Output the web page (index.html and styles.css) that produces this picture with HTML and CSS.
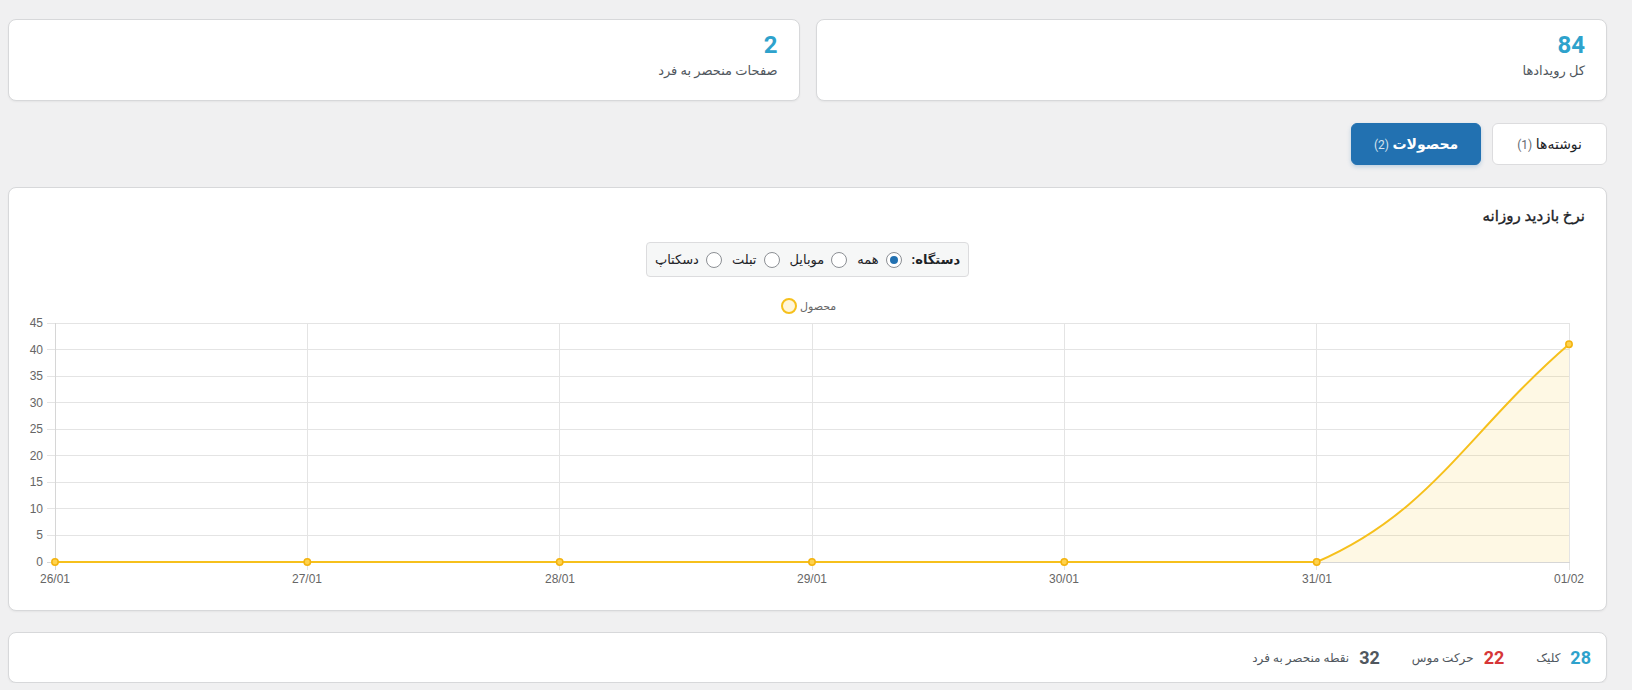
FILE: index.html
```html
<!DOCTYPE html>
<html lang="fa">
<head>
<meta charset="utf-8">
<title>آمار</title>
<link rel="stylesheet" href="styles.css">
</head>
<body>
<div class="wrap" dir="rtl">
  <div class="cards">
    <div class="card stat-card">
      <div class="num">84</div>
      <div class="lbl">کل رویدادها</div>
    </div>
    <div class="card stat-card">
      <div class="num">2</div>
      <div class="lbl">صفحات منحصر به فرد</div>
    </div>
  </div>

  <div class="tabs">
    <button class="tab">نوشته‌ها <span class="cnt">(1)</span></button>
    <button class="tab active">محصولات <span class="cnt">(2)</span></button>
  </div>

  <div class="card chart-card">
    <div class="chart-head">
      <h3 class="title">نرخ بازدید روزانه</h3>
      <div class="device-row">
        <div class="device">
          <span class="dlabel">دستگاه:</span>
          <label class="opt"><span class="rb checked"></span>همه</label>
          <label class="opt"><span class="rb"></span>موبایل</label>
          <label class="opt"><span class="rb"></span>تبلت</label>
          <label class="opt"><span class="rb"></span>دسکتاپ</label>
        </div>
      </div>
    </div>
    <svg class="chart" width="1597" height="324" viewBox="0 0 1597 324" xmlns="http://www.w3.org/2000/svg">
      <!-- legend -->
      <circle cx="780" cy="20" r="7" fill="#fff6db" stroke="#f6c01c" stroke-width="2"/>
      <text x="791" y="24" class="legend">محصول</text>

      <!-- horizontal grid -->
      <g stroke="#e4e4e4" stroke-width="1">
        <line x1="38" y1="37.5" x2="1560" y2="37.5"/>
        <line x1="38" y1="63.5" x2="1560" y2="63.5"/>
        <line x1="38" y1="90.5" x2="1560" y2="90.5"/>
        <line x1="38" y1="116.5" x2="1560" y2="116.5"/>
        <line x1="38" y1="143.5" x2="1560" y2="143.5"/>
        <line x1="38" y1="169.5" x2="1560" y2="169.5"/>
        <line x1="38" y1="196.5" x2="1560" y2="196.5"/>
        <line x1="38" y1="222.5" x2="1560" y2="222.5"/>
        <line x1="38" y1="249.5" x2="1560" y2="249.5"/>
      </g>
      <!-- vertical grid -->
      <g stroke="#e4e4e4" stroke-width="1">
        <line x1="298.5" y1="37" x2="298.5" y2="284"/>
        <line x1="550.5" y1="37" x2="550.5" y2="284"/>
        <line x1="803.5" y1="37" x2="803.5" y2="284"/>
        <line x1="1055.5" y1="37" x2="1055.5" y2="284"/>
        <line x1="1307.5" y1="37" x2="1307.5" y2="284"/>
        <line x1="1560.5" y1="37" x2="1560.5" y2="284"/>
      </g>
      <!-- axes -->
      <g stroke="#d6d6d6" stroke-width="1">
        <line x1="46.5" y1="37" x2="46.5" y2="284"/>
        <line x1="38" y1="276.5" x2="1561" y2="276.5"/>
      </g>

      <!-- y labels -->
      <g class="tick" text-anchor="end">
        <text x="34" y="41">45</text>
        <text x="34" y="68">40</text>
        <text x="34" y="94">35</text>
        <text x="34" y="121">30</text>
        <text x="34" y="147">25</text>
        <text x="34" y="174">20</text>
        <text x="34" y="200">15</text>
        <text x="34" y="227">10</text>
        <text x="34" y="253">5</text>
        <text x="34" y="280">0</text>
      </g>
      <!-- x labels -->
      <g class="tick" text-anchor="middle">
        <text x="46" y="297">26/01</text>
        <text x="298" y="297">27/01</text>
        <text x="551" y="297">28/01</text>
        <text x="803" y="297">29/01</text>
        <text x="1055" y="297">30/01</text>
        <text x="1308" y="297">31/01</text>
        <text x="1560" y="297">01/02</text>
      </g>

      <!-- fill -->
      <path d="M1307.7 276 C1422.6 226.4 1459.1 145.3 1560 58.2 L1560 276 Z" fill="rgba(250,195,30,0.12)"/>
      <!-- line -->
      <path d="M46 276 L1307.7 276 C1422.6 226.4 1459.1 145.3 1560 58.2" fill="none" stroke="#f6c01c" stroke-width="2"/>
      <!-- points -->
      <g fill="#ffd24d" stroke="#f3b310" stroke-width="1.5">
        <circle cx="46" cy="276" r="3.2"/>
        <circle cx="298.3" cy="276" r="3.2"/>
        <circle cx="550.7" cy="276" r="3.2"/>
        <circle cx="803" cy="276" r="3.2"/>
        <circle cx="1055.3" cy="276" r="3.2"/>
        <circle cx="1307.7" cy="276" r="3.2"/>
        <circle cx="1560" cy="58.2" r="3.2"/>
      </g>
    </svg>
  </div>

  <div class="card summary">
    <div class="sum-item"><span class="snum blue">28</span><span class="slbl">کلیک</span></div>
    <div class="sum-item"><span class="snum red">22</span><span class="slbl">حرکت موس</span></div>
    <div class="sum-item"><span class="snum gray">32</span><span class="slbl">نقطه منحصر به فرد</span></div>
  </div>
</div>
</body>
</html>
```

FILE: styles.css
```css
* { box-sizing: border-box; }

body {
  margin: 0;
  background: #f0f0f1;
  font-family: Roboto, "DejaVu Sans", sans-serif;
  color: #1d2327;
}

.wrap {
  padding: 19px 25px 0 8px;
}

.card {
  background: #fff;
  border: 1px solid #d7d8da;
  border-radius: 8px;
  box-shadow: 0 1px 2px rgba(0, 0, 0, 0.05);
}

.cards {
  display: grid;
  grid-template-columns: 1fr 1fr;
  gap: 16px;
}

.stat-card {
  height: 82px;
  padding: 11px 21px 0;
}

.num {
  font-size: 24px;
  line-height: 29px;
  font-weight: 700;
  color: #2ea2cc;
}

.lbl {
  font-size: 13px;
  line-height: 20px;
  color: #50575e;
  margin-top: 1px;
}

.tabs {
  display: flex;
  gap: 11px;
  margin-top: 22px;
}

.tab {
  height: 42px;
  padding: 0 24px;
  border: 1px solid #dcdcde;
  border-radius: 6px;
  background: #fff;
  font-family: inherit;
  font-size: 14px;
  color: #1d2327;
  cursor: pointer;
}

.tab .cnt {
  font-size: 12px;
  color: #646970;
}

.tab.active {
  background: #2271b1;
  border-color: #2271b1;
  color: #fff;
  font-weight: 700;
  padding: 0 22px;
  box-shadow: 0 2px 4px rgba(34, 113, 177, 0.25);
}

.tab.active .cnt {
  color: #d5e3f0;
  font-weight: 400;
}

.chart-card {
  margin-top: 22px;
}

.chart-head {
  padding: 16px 21px 0;
}

.title {
  margin: 0;
  font-size: 15px;
  line-height: 24px;
  font-weight: 400;
  -webkit-text-stroke: 0.35px #1d2327;
  color: #1d2327;
}

.device-row {
  display: flex;
  justify-content: center;
  margin-top: 14px;
}

.device {
  display: flex;
  align-items: center;
  gap: 10px;
  height: 35px;
  padding: 0 8px;
  background: #f6f7f7;
  border: 1px solid #dcdcde;
  border-radius: 4px;
  font-size: 13px;
  color: #1d2327;
}

.dlabel {
  font-weight: 700;
}

.opt {
  display: flex;
  align-items: center;
  gap: 7px;
}

.rb {
  width: 16px;
  height: 16px;
  border: 1px solid #8c8f94;
  border-radius: 50%;
  background: #fff;
  display: flex;
  align-items: center;
  justify-content: center;
}

.rb.checked::after {
  content: "";
  width: 8px;
  height: 8px;
  border-radius: 50%;
  background: #2271b1;
}

.chart {
  display: block;
  margin-top: 9px;
  direction: ltr;
}

.chart .tick {
  font-family: "Liberation Sans", Arial, sans-serif;
  font-size: 12px;
  fill: #666;
}

.chart .legend {
  font-family: "DejaVu Sans", sans-serif;
  font-size: 11px;
  fill: #666;
}

.summary {
  margin-top: 21px;
  height: 51px;
  display: flex;
  align-items: center;
  gap: 32px;
  padding: 0 15px;
}

.sum-item {
  display: flex;
  align-items: center;
  gap: 10px;
}

.snum {
  font-size: 18px;
  font-weight: 700;
}

.snum.blue { color: #2ea2cc; }
.snum.red { color: #d63638; }
.snum.gray { color: #50575e; }

.slbl {
  font-size: 12px;
  color: #50575e;
}
```
